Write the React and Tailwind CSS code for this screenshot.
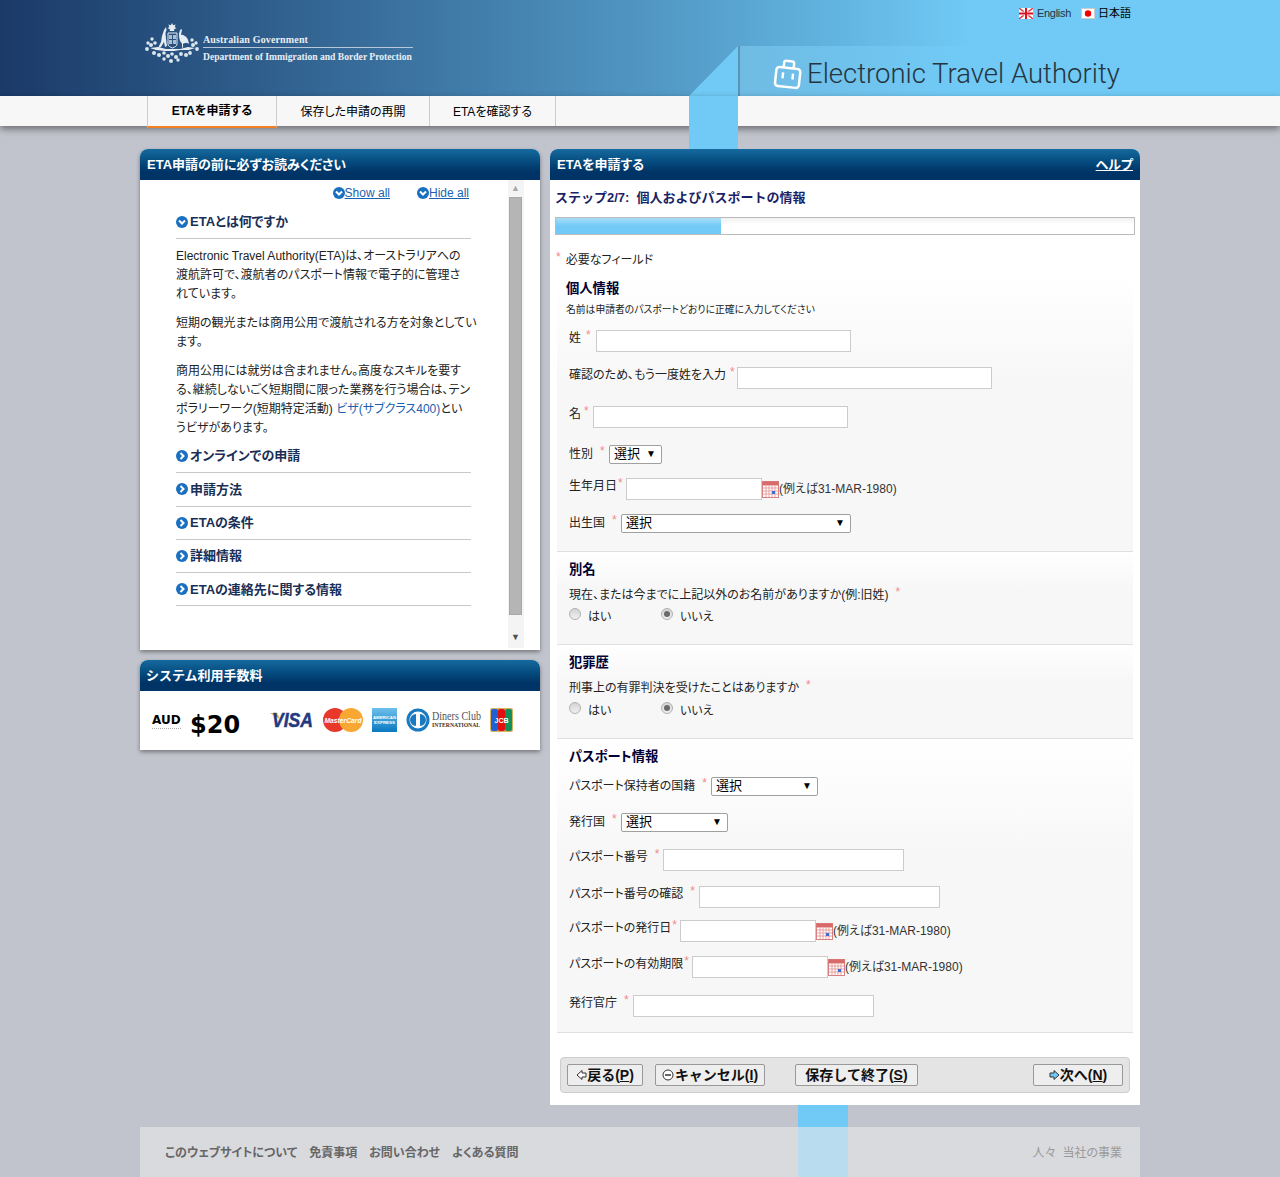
import React from 'react';

const Star = ({ className = 'ml-[5px]' }) => (
    <span className={`text-[#f08a8a] text-[12px] relative top-[-3px] ${className}`}>*</span>
);

function Calendar() {
    return (
        <svg width="17" height="17" viewBox="0 0 17 17" className="shrink-0">
            <rect x="0.5" y="0.5" width="16" height="16" fill="#fff" stroke="#d98080" />
            <rect x="0.5" y="0.5" width="16" height="4" fill="#d96a6a" />
            <path d="M1 7h15M1 10h15M1 13h15M4 5v11M7 5v11M10 5v11M13 5v11" stroke="#e8a0a0" strokeWidth="1" />
            <rect x="10" y="10" width="3" height="3" fill="#3a6fd0" />
        </svg>
    );
}

function Chevron({ open }) {
    return (
        <svg width="12" height="12" viewBox="0 0 12 12" className="shrink-0">
            <circle cx="6" cy="6" r="6" fill="#1a6fc0" />
            <path d={open ? 'M3 4.5 6 7.5 9 4.5' : 'M4.5 3 7.5 6 4.5 9'} fill="none" stroke="#fff" strokeWidth="2" />
        </svg>
    );
}

function Crest() {
    return (
        <svg width="56" height="42" viewBox="0 0 56 42" className="shrink-0">
            <g fill="#e6edf3">
                <path d="M28 1l1.2 2.2 2.4-.6-.9 2.3 1.9 1.4-2.4.6V9h-4.4V6.900l-2.400-.6 1.900-1.400-.9-2.300 2.400.6z" />
                <path d="M24 11h9v11c0 2-2 3-4.500 4-2.500-1-4.500-2-4.500-4z" fill="none" stroke="#e6edf3" strokeWidth="1" />
                <path d="M25 13h3v4h-3zM29 13h3v4h-3zM25 18h3v4h-3zM29 18h3v4h-3z" opacity=".7" />
                <path d="M20 8l2-3 .5 3-1 3 .5 6 1 7-2 1-1-5-3 5-5 2 2-1 3-6 1-6z" />
                <path d="M35 13c0-3 1-5 2-6l1 .8-1 5c3 0 6 2 7 5l1 4-3-1-3 1v4h-1v-4c-2-2-3-5-3-9z" />
                <path d="M6 26l8-1 8 2 14 0 8-2 7 1-6 2-9 0-6 1-9 0-9-1z" />
            </g>
            <g fill="#dce6ee">
                <circle cx="4" cy="21" r="1.700" /><circle cx="8" cy="17" r="1.700" /><circle cx="7" cy="23" r="2" /><circle cx="11" cy="21" r="1.800" />
                <circle cx="3" cy="27" r="1.900" /><circle cx="52" cy="21" r="1.700" /><circle cx="48" cy="18" r="1.700" /><circle cx="49" cy="23" r="2" />
                <circle cx="53" cy="27" r="1.900" /><circle cx="10" cy="31" r="2" /><circle cx="15" cy="33" r="2" /><circle cx="20" cy="31" r="1.800" />
                <circle cx="24" cy="34" r="2" /><circle cx="28" cy="32" r="1.800" /><circle cx="32" cy="35" r="2" /><circle cx="37" cy="32" r="1.900" />
                <circle cx="42" cy="33" r="2" /><circle cx="46" cy="31" r="1.900" /><circle cx="20" cy="37" r="1.700" /><circle cx="27" cy="39" r="2" />
                <circle cx="34" cy="38" r="1.700" />
            </g>
        </svg>
    );
}

function BagIcon() {
    return (
        <svg width="28" height="30" viewBox="0 0 28 30" className="shrink-0 rotate-[6deg]">
            <rect x="2" y="9" width="24" height="19" rx="3" fill="none" stroke="#fff" strokeWidth="2.500" />
            <path d="M9 9V4a2 2 0 0 1 2-2h6a2 2 0 0 1 2 2v5" fill="none" stroke="#fff" strokeWidth="2.500" />
            <path d="M9 14v6M19 14v6" stroke="#fff" strokeWidth="2.500" />
        </svg>
    );
}

function UkFlag() {
    return (
        <svg width="14" height="11" viewBox="0 0 14 11" className="shrink-0">
            <rect width="14" height="11" fill="#fff" />
            <path d="M0 0l14 11M14 0 0 11" stroke="#e0404a" strokeWidth="1.500" />
            <path d="M0 5.500h14M7 0v11" stroke="#fff" strokeWidth="3.500" />
            <path d="M0 5.500h14M7 0v11" stroke="#e01020" strokeWidth="2" />
        </svg>
    );
}

function JpFlag() {
    return (
        <svg width="14" height="11" viewBox="0 0 14 11" className="shrink-0">
            <rect x="0.5" y="0.5" width="13" height="10" fill="#fff" stroke="#ccc" />
            <circle cx="7" cy="5.500" r="3.200" fill="#f00000" />
        </svg>
    );
}

function CardLogos() {
    return (
        <div className="flex items-center ml-[30px]">
            <svg width="44" height="20" viewBox="0 0 44 20" className="shrink-0 overflow-visible">
                <path d="M0 3h7l3 6z" fill="#e8a33a" />
                <text x="2" y="17" fontFamily="Liberation Sans" fontWeight="700" fontStyle="italic" fontSize="20" fill="#23397f" stroke="#23397f" strokeWidth="0.5" textLength="41" lengthAdjust="spacingAndGlyphs">VISA</text>
            </svg>
            <svg width="40" height="24" viewBox="0 0 40 24" className="shrink-0 ml-[9px] overflow-visible">
                <circle cx="12" cy="12" r="12" fill="#e8382c" />
                <circle cx="28" cy="12" r="12" fill="#f8a733" />
                <text x="20" y="15" textAnchor="middle" fontFamily="Liberation Sans" fontWeight="700" fontStyle="italic" fontSize="7.500" fill="#fff" textLength="37" lengthAdjust="spacingAndGlyphs">MasterCard</text>
            </svg>
            <svg width="25" height="24" viewBox="0 0 25 24" className="shrink-0 ml-[9px] overflow-visible">
                <defs>
                    <linearGradient id="amex" x1="0" y1="0" x2="0" y2="1">
                        <stop offset="0" stopColor="#6fc0ea" />
                        <stop offset="1" stopColor="#0a78c0" />
                    </linearGradient>
                </defs>
                <rect width="25" height="24" fill="url(#amex)" />
                <text x="12.500" y="11" textAnchor="middle" fontFamily="Liberation Sans" fontWeight="700" fontSize="4" fill="#fff" textLength="23" lengthAdjust="spacingAndGlyphs">AMERICAN</text>
                <text x="12.500" y="16" textAnchor="middle" fontFamily="Liberation Sans" fontWeight="700" fontSize="4" fill="#fff" textLength="21" lengthAdjust="spacingAndGlyphs">EXPRESS</text>
            </svg>
            <svg width="75" height="20" viewBox="0 0 75 20" className="shrink-0 ml-[9px] overflow-visible">
                <circle cx="12" cy="10" r="10" fill="none" stroke="#1a7ac0" strokeWidth="3" />
                <path d="M10 4a6 6 0 0 0 0 12zM14 4a6 6 0 0 1 0 12z" fill="#1a7ac0" />
                <text x="26" y="10" fontFamily="Liberation Serif" fontSize="12.500" fill="#555" textLength="49" lengthAdjust="spacingAndGlyphs">Diners Club</text>
                <text x="26" y="17" fontFamily="Liberation Serif" fontWeight="700" fontSize="6" fill="#333" textLength="48" lengthAdjust="spacingAndGlyphs">INTERNATIONAL</text>
            </svg>
            <svg width="23" height="24" viewBox="0 0 23 24" className="shrink-0 ml-[9px] overflow-visible">
                <rect width="23" height="24" rx="2" fill="#d8b060" />
                <rect x="1" y="1" width="7" height="22" rx="2" fill="#2060d0" />
                <rect x="8" y="1" width="7" height="22" rx="2" fill="#e01010" />
                <rect x="15" y="1" width="7" height="22" rx="2" fill="#10905a" />
                <text x="11.500" y="15" textAnchor="middle" fontFamily="Liberation Sans" fontWeight="700" fontSize="7" fill="#fff">JCB</text>
            </svg>
        </div>
    );
}

const PanelHeader = ({ children, right }) => (
    <div className="h-[31px] rounded-t-[8px] bg-gradient-to-b from-[#156a9e] to-[#003366] to-[75%] flex items-center justify-between pl-[7px] pr-[7px] text-white text-[13px] font-bold">
        <span>{children}</span>
        {right}
    </div>
);

const Heading = ({ children, className = '' }) => (
    <div className={`h-[20px] flex items-center text-[13.300px] font-bold text-[#000033] ${className}`}>{children}</div>
);

const TextInput = ({ className }) => (
    <input type="text" className={`h-[22px] shrink-0 bg-white border border-[#cccccc] ${className}`} />
);

function Select({ className }) {
    return (
        <div className={`relative h-[19px] mb-[1px] shrink-0 ${className}`}>
            <select className="appearance-none w-full h-full bg-white border border-[#a0a0a0] rounded-[2px] pl-[4px] pb-[3px] text-[13px] leading-[15px] text-black">
                <option>選択</option>
            </select>
            <span className="absolute right-[6px] top-[2px] text-[10px] leading-[14px] text-black">▼</span>
        </div>
    );
}

function Row({ label, className, labelClass, children }) {
    return (
        <div className={`flex items-center h-[22px] ${className}`}>
            <span className={`shrink-0 whitespace-nowrap pb-[6px] ${labelClass}`}>{label}</span>
            {children}
        </div>
    );
}

function DateField({ label, className, labelClass }) {
    return (
        <Row label={label} className={className} labelClass={labelClass}>
            <TextInput className="w-[136px]" />
            <Calendar />
            <span className="whitespace-nowrap text-[12px] text-[#333333]">(例えば31-MAR-1980)</span>
        </Row>
    );
}

function Radio({ checked }) {
    return (
        <span className="w-[12px] h-[12px] rounded-full border border-[#b0b0b0] bg-gradient-to-b from-[#d4d4d4] to-[#f0f0f0] flex items-center justify-center shrink-0 relative top-[-3px]">
            {checked && <span className="w-[6px] h-[6px] rounded-full bg-[#6a6a6a]" />}
        </span>
    );
}

function YesNo({ className }) {
    return (
        <div className={`flex items-center h-[20px] text-[12px] ${className}`}>
            <Radio />
            <span className="ml-[7px] w-[73px]">はい</span>
            <Radio checked />
            <span className="ml-[7px]">いいえ</span>
        </div>
    );
}

const closedItems = ['オンラインでの申請', '申請方法', 'ETAの条件', '詳細情報', 'ETAの連絡先に関する情報'];

function AccordionTitle({ title, open, className }) {
    return (
        <div className={`flex items-center gap-[2px] border-b border-[#c8c8c8] text-[13px] font-bold text-[#1a2f55] whitespace-nowrap ${className}`}>
            <Chevron open={open} />
            <span>{title}</span>
        </div>
    );
}

function InfoPanel() {
    return (
        <div className="h-[501px] bg-white rounded-t-[8px] shadow-[0_2px_4px_rgba(0,0,0,0.4)]">
            <PanelHeader>ETA申請の前に必ずお読みください</PanelHeader>
            <div className="flex h-[470px]">
                <div className="w-[368px] pl-[36px]">
                    <div className="w-[293px] h-[26px] flex items-center justify-end gap-[27px] text-[12px] text-[#1a5fb0]">
                        <a href="#" className="flex items-center underline"><Chevron open />Show all</a>
                        <a href="#" className="flex items-center underline"><Chevron open />Hide all</a>
                    </div>
                    <div className="w-[295px]">
                        <AccordionTitle title="ETAとは何ですか" open className="h-[32px] mt-[1px] pb-[1px]" />
                        <div className="mt-[8px] text-[12px] leading-[19px] text-[#222222] whitespace-nowrap">
                            <p>Electronic Travel Authority(ETA)は、オーストラリアへの<br />渡航許可で、渡航者のパスポート情報で電子的に管理さ<br />れています。</p>
                            <p className="mt-[10px]">短期の観光または商用公用で渡航される方を対象としてい<br />ます。</p>
                            <p className="mt-[10px]">商用公用には就労は含まれません。高度なスキルを要す<br />る、継続しないごく短期間に限った業務を行う場合は、テン<br />ポラリーワーク(短期特定活動) <span className="text-[#1a5fb0]">ビザ(サブクラス400)</span>とい<br />うビザがあります。</p>
                        </div>
                        <div className="mt-[2px]">
                            {closedItems.map((item) => (
                                <AccordionTitle key={item} title={item} className="h-[33.300px]" />
                            ))}
                        </div>
                    </div>
                </div>
                <div className="w-[16px] h-[468px] bg-[#f4f4f4] flex flex-col items-start pl-[1px]">
                    <span className="w-[13px] h-[17px] flex items-center justify-center text-[9px] text-[#a8a8a8]">▲</span>
                    <div className="w-[13px] h-[418px] bg-[#b5b5b5] border border-[#a8a8a8]" />
                    <span className="w-[13px] mt-auto h-[20px] flex items-center justify-center text-[9px] text-[#505050]">▼</span>
                </div>
            </div>
        </div>
    );
}

function FeePanel() {
    return (
        <div className="h-[90px] mt-[10px] bg-white rounded-t-[8px] shadow-[0_2px_4px_rgba(0,0,0,0.4)]">
            <PanelHeader><span className="relative left-[-1px] [font-feature-settings:normal]">システム利用手数料</span></PanelHeader>
            <div className="flex items-center h-[59px] pl-[12px] pb-[2px]">
                <div className="flex items-start mt-[10px] [font-family:'DejaVu_Sans',sans-serif] font-bold text-black">
                    <div className="w-[38px] mt-[2px]">
                        <span className="block w-[29px] text-[12px] leading-[14px] pb-[1px] border-b border-dotted border-[#aaaaaa]">AUD</span>
                    </div>
                    <span className="text-[24px] leading-[28px]">$20</span>
                </div>
                <CardLogos />
            </div>
        </div>
    );
}

function FormPanel() {
    return (
        <div className="w-[590px] h-[956px] bg-white rounded-t-[8px] ml-[10px]">
            <PanelHeader right={<a href="#" className="underline">ヘルプ</a>}>ETAを申請する</PanelHeader>
            <div className="px-[5px]">
                <div className="h-[20px] mt-[8px] flex items-center text-[13px] font-bold text-[#1a1f66] whitespace-pre [font-feature-settings:normal]">ステップ2/7:  個人およびパスポートの情報</div>
                <div className="h-[18px] mt-[9px] border border-[#bbbbbb] bg-gradient-to-b from-[#f0f0f0] to-white to-[40%]">
                    <div className="h-full w-[165px] bg-gradient-to-b from-[#a8def8] via-[#70caf5] to-[#70caf5]" />
                </div>
                <div className="h-[16px] mt-[17px] flex items-center text-[12px] text-[#222222]">
                    <Star className="ml-[1px] mr-[5px]" />必要なフィールド
                </div>
            </div>
            <div className="mx-[7px] text-[12px] text-[#222222]">
                <section className="h-[277px] mt-[7px] pl-[9px] border-b border-[#e0e0e0] bg-gradient-to-b from-white to-[#f7f7f7] to-[40%]">
                    <Heading className="pt-[2px] h-[26px]">個人情報</Heading>
                    <div className="h-[16px] mt-[1px] flex items-center text-[9.800px] text-[#222222]">名前は申請者のパスポートどおりに正確に入力してください</div>
                    <div className="pl-[3px]">
                        <Row label={<>姓<Star /></>} labelClass="w-[27px]" className="mt-[12px]"><TextInput className="w-[255px]" /></Row>
                        <Row label={<>確認のため、もう一度姓を入力<Star className="ml-[4px]" /></>} labelClass="w-[168px]" className="mt-[15px]"><TextInput className="w-[255px]" /></Row>
                        <Row label={<>名<Star className="ml-[3px]" /></>} labelClass="w-[24px]" className="mt-[17px]"><TextInput className="w-[255px]" /></Row>
                        <Row label={<>性別<Star className="ml-[7px]" /></>} labelClass="w-[40px] !pb-[3px]" className="mt-[16px]"><Select className="w-[53px]" /></Row>
                        <DateField label={<>生年月日<Star className="ml-[1px]" /></>} labelClass="w-[57px]" className="mt-[12px]" />
                        <Row label={<>出生国<Star className="ml-[7px]" /></>} labelClass="w-[52px] !pb-[3px]" className="mt-[13px]"><Select className="w-[230px]" /></Row>
                    </div>
                </section>
                <section className="h-[93px] pl-[12px] border-b border-[#e0e0e0] bg-gradient-to-b from-white to-[#f7f7f7] to-[40%]">
                    <Heading className="mt-0 pt-[8px] h-[28px]">別名</Heading>
                    <div className="h-[18px] mt-[6px] flex items-center whitespace-nowrap">現在、または今までに上記以外のお名前がありますか(例:旧姓)<Star className="ml-[7px]" /></div>
                    <YesNo className="mt-[3px]" />
                </section>
                <section className="h-[94px] pl-[12px] border-b border-[#e0e0e0] bg-gradient-to-b from-white to-[#f7f7f7] to-[40%]">
                    <Heading className="pt-[8px] h-[28px]">犯罪歴</Heading>
                    <div className="h-[18px] mt-[6px] flex items-center whitespace-nowrap">刑事上の有罪判決を受けたことはありますか<Star className="ml-[7px]" /></div>
                    <YesNo className="mt-[4px]" />
                </section>
                <section className="h-[294px] pl-[12px] border-b border-[#e0e0e0] bg-gradient-to-b from-white to-[#f7f7f7] to-[40%]">
                    <Heading className="pt-[8px] h-[28px]">パスポート情報</Heading>
                    <Row label={<>パスポート保持者の国籍<Star className="ml-[7px]" /></>} labelClass="w-[142px] !pb-[3px]" className="mt-[9px]"><Select className="w-[107px]" /></Row>
                    <Row label={<>発行国<Star className="ml-[7px]" /></>} labelClass="w-[52px] !pb-[3px]" className="mt-[14px]"><Select className="w-[107px]" /></Row>
                    <Row label={<>パスポート番号<Star className="ml-[7px]" /></>} labelClass="w-[94px]" className="mt-[15px]"><TextInput className="w-[241px]" /></Row>
                    <Row label={<>パスポート番号の確認<Star className="ml-[7px]" /></>} labelClass="w-[130px]" className="mt-[15px]"><TextInput className="w-[241px]" /></Row>
                    <DateField label={<>パスポートの発行日<Star className="ml-[1px]" /></>} labelClass="w-[111px]" className="mt-[12px]" />
                    <DateField label={<>パスポートの有効期限<Star className="ml-[1px]" /></>} labelClass="w-[123px]" className="mt-[14px]" />
                    <Row label={<>発行官庁<Star className="ml-[7px]" /></>} labelClass="w-[64px]" className="mt-[17px]"><TextInput className="w-[241px]" /></Row>
                </section>
            </div>
            <div className="mx-[10px] mt-[24px] h-[36px] bg-[#e4e4e4] border border-[#cccccc] rounded-[4px] flex items-center pl-[6px] text-[14px] font-bold text-[#111111] [font-feature-settings:normal]">
                <button className="w-[76px] h-[22px] bg-[#eeeeee] border border-[#999999] rounded-[2px] flex items-center justify-center">
                    <svg width="11" height="12" viewBox="0 0 11 12"><path d="M6 1.500 1 6l5 4.500V8h4V4H6z" fill="#fff" stroke="#333" strokeWidth="1" /></svg>
                    戻る(<span className="underline">P</span>)
                </button>
                <button className="w-[110px] h-[22px] ml-[12px] bg-[#eeeeee] border border-[#999999] rounded-[2px] flex items-center justify-center">
                    <svg width="12" height="12" viewBox="0 0 12 12" className="mr-[1px]"><circle cx="6" cy="6" r="5" fill="#fff" stroke="#333" /><path d="M3 6h6" stroke="#333" strokeWidth="1.500" /></svg>
                    キャンセル(<span className="underline">I</span>)
                </button>
                <button className="w-[123px] h-[22px] ml-[30px] bg-[#eeeeee] border border-[#999999] rounded-[2px] flex items-center justify-center">
                    保存して終了(<span className="underline">S</span>)
                </button>
                <button className="w-[90px] h-[22px] ml-[115px] bg-[#eeeeee] border border-[#999999] rounded-[2px] flex items-center justify-center">
                    <svg width="11" height="12" viewBox="0 0 11 12"><path d="M5 1.500 10 6l-5 4.500V8H1V4h4z" fill="#70caf5" stroke="#333" strokeWidth="1" /></svg>
                    次へ(<span className="underline">N</span>)
                </button>
            </div>
        </div>
    );
}

export default function App() {
    return (
        <div className="relative h-[1177px] overflow-hidden bg-[#c1c4cc] text-black [font-family:'Liberation_Sans','Noto_Sans_CJK_JP',sans-serif] [font-feature-settings:'palt']">
            {/* blue strips behind the panels */}
            <div className="absolute left-[689px] top-[96px] w-[49px] h-[53px] bg-[#70caf5] z-20" />
            <div className="absolute left-[798px] top-[1105px] w-[50px] h-[72px] bg-[#70caf5]" />

            <header className="h-[96px] flex bg-gradient-to-r from-[#1b3a68] to-[#70caf5] to-[76%]">
                <div className="flex-1 flex items-start pl-[144px] pt-[22px]">
                    <Crest />
                    <div className="ml-[3px] w-[210px] mt-[11px] [font-family:'Liberation_Serif',serif] font-bold text-[#e8eef4] whitespace-nowrap">
                        <div className="text-[10px] leading-[13px] tracking-[0.15px] border-b border-[#b8c8d8] pb-[1px]">Australian Government</div>
                        <div className="text-[9.600px] leading-[13px] mt-[2px]">Department of Immigration and Border Protection</div>
                    </div>
                </div>
                <div className="w-[591px] shrink-0 flex flex-col">
                    <div className="flex items-center justify-end mt-[5px] pr-[149px] h-[16px] text-[11px] tracking-[-0.3px] text-[#223344] whitespace-nowrap">
                        <UkFlag />
                        <span className="ml-[4px]">English</span>
                        <span className="ml-[10px]"><JpFlag /></span>
                        <span className="ml-[3px] text-black tracking-normal">日本語</span>
                    </div>
                    <div className="mt-auto h-[50px] flex">
                        <svg width="49" height="50" viewBox="0 0 49 50" className="shrink-0">
                            <path d="M0 50 49 0v50z" fill="#70caf5" />
                        </svg>
                        <div className="flex-1 flex items-center bg-gradient-to-r from-[#6fbbe4] to-[#70caf5] to-[40%] border-l-2 border-[#5a93b5] pl-[34px] pt-[6px]">
                            <BagIcon />
                            <span className="ml-[5px] text-[27.500px] leading-[32px] font-light text-[#253540] whitespace-nowrap [font-family:Roboto,sans-serif]">Electronic Travel Authority</span>
                        </div>
                    </div>
                </div>
            </header>

            <nav className="relative z-10 h-[30px] bg-[#f7f7f7] shadow-[0_3px_7px_rgba(0,0,0,0.45)] pl-[147px] flex text-[12px] text-black">
                <a href="#" className="w-[130px] h-[32px] border-x border-[#cccccc] border-b-2 border-b-[#f08020] bg-[#f7f7f7] flex items-center justify-center font-bold">ETAを申請する</a>
                <a href="#" className="w-[153px] border-r border-[#cccccc] flex items-center justify-center pt-[1px]">保存した申請の再開</a>
                <a href="#" className="w-[126px] border-r border-[#cccccc] flex items-center justify-center pt-[1px]">ETAを確認する</a>
            </nav>

            <main className="relative z-30 flex pl-[140px] mt-[23px]">
                <div className="w-[400px]">
                    <InfoPanel />
                    <FeePanel />
                </div>
                <FormPanel />
            </main>

            <footer className="relative z-30 ml-[140px] mt-[22px] w-[1000px] h-[50px] bg-[rgba(233,233,233,0.6)] flex items-center justify-between pl-[25px] pr-[18px] pt-[1px] text-[12px]">
                <div className="flex gap-[12px] font-bold text-[#666666]">
                    <a href="#">このウェブサイトについて</a>
                    <a href="#">免責事項</a>
                    <a href="#">お問い合わせ</a>
                    <a href="#">よくある質問</a>
                </div>
                <a href="#" className="text-[#999999] whitespace-pre">人々  当社の事業</a>
            </footer>
        </div>
    );
}
